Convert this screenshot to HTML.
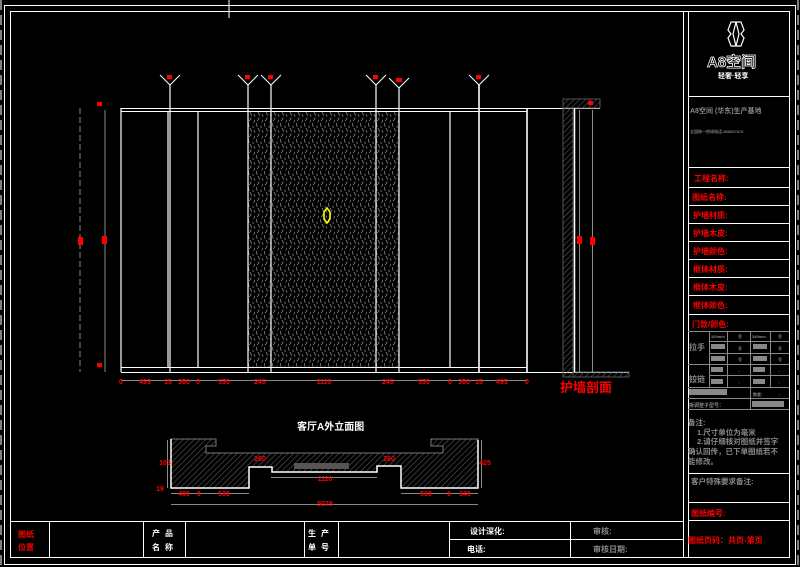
<!DOCTYPE html>
<html><head><meta charset="utf-8"><style>
html,body{margin:0;padding:0;background:#000;}
svg{display:block}
text{font-family:"Liberation Sans","Noto Sans CJK SC",sans-serif;font-weight:bold}
</style></head><body>
<svg width="800" height="567" viewBox="0 0 800 567" xmlns="http://www.w3.org/2000/svg">
<defs>
<pattern id="hatch" width="4" height="4" patternUnits="userSpaceOnUse" patternTransform="rotate(45)">
<line x1="0" y1="0" x2="0" y2="4" stroke="#666" stroke-width="1"/>
</pattern>
<pattern id="wave" width="8" height="16" patternUnits="userSpaceOnUse">
<path d="M2 0 Q5 4 2 8 Q-1 12 2 16" stroke="#999" stroke-width="0.7" fill="none" stroke-dasharray="4 2"/>
<path d="M6 2 Q8 6 6 10 Q4 14 6 18" stroke="#888" stroke-width="0.7" fill="none" stroke-dasharray="3 3"/>
</pattern>
</defs>
<rect width="800" height="567" fill="#000"/>
<line x1="1" y1="0" x2="1" y2="567" stroke="#fff" stroke-dasharray="10 5"/>
<line x1="798" y1="0" x2="798" y2="567" stroke="#fff" stroke-dasharray="10 5"/>
<rect x="4.5" y="5.5" width="791" height="559" fill="none" stroke="#fff"/>
<rect x="10.5" y="11.5" width="779" height="546" fill="none" stroke="#fff"/>
<line x1="229" y1="0" x2="229" y2="18" stroke="#fff"/>
<line x1="683.5" y1="11" x2="683.5" y2="558" stroke="#fff"/>
<line x1="688.5" y1="11" x2="688.5" y2="558" stroke="#fff"/>
<g stroke="#fff">
<line x1="688" y1="96.5" x2="789" y2="96.5"/>
<line x1="688" y1="167.5" x2="789" y2="167.5"/>
<line x1="688" y1="187.5" x2="789" y2="187.5"/>
<line x1="688" y1="205.5" x2="789" y2="205.5"/>
<line x1="688" y1="223.5" x2="789" y2="223.5"/>
<line x1="688" y1="241.5" x2="789" y2="241.5"/>
<line x1="688" y1="259.5" x2="789" y2="259.5"/>
<line x1="688" y1="277.5" x2="789" y2="277.5"/>
<line x1="688" y1="295.5" x2="789" y2="295.5"/>
<line x1="688" y1="314.5" x2="789" y2="314.5"/>
<line x1="688" y1="473.5" x2="789" y2="473.5"/>
<line x1="688" y1="502.5" x2="789" y2="502.5"/>
<line x1="688" y1="520.5" x2="789" y2="520.5"/>
</g>
<g stroke="#888">
<line x1="688" y1="331.5" x2="789" y2="331.5"/>
<line x1="709" y1="341.5" x2="789" y2="341.5"/>
<line x1="709" y1="353.5" x2="789" y2="353.5"/>
<line x1="688" y1="364.5" x2="789" y2="364.5"/>
<line x1="709" y1="375.5" x2="789" y2="375.5"/>
<line x1="688" y1="387.5" x2="789" y2="387.5"/>
<line x1="688" y1="398.5" x2="789" y2="398.5"/>
<line x1="688" y1="409.5" x2="789" y2="409.5"/>
<line x1="709.5" y1="331" x2="709.5" y2="387"/>
<line x1="727.5" y1="331" x2="727.5" y2="387"/>
<line x1="750.5" y1="331" x2="750.5" y2="409"/>
<line x1="770.5" y1="331" x2="770.5" y2="387"/>
</g>
<g fill="#888">
<rect x="711" y="344" width="14" height="5"/><rect x="711" y="356" width="14" height="5"/>
<rect x="753" y="344" width="14" height="5"/><rect x="753" y="356" width="14" height="5"/>
<rect x="711" y="367" width="12" height="5"/><rect x="711" y="379" width="12" height="5"/>
<rect x="753" y="367" width="12" height="5"/><rect x="753" y="379" width="12" height="5"/>
<rect x="689" y="389" width="38" height="6"/><rect x="752" y="401" width="32" height="6"/>
</g>
<g fill="#888" font-size="4"><text x="711" y="338">320mm</text><text x="752" y="338">340mm</text>
<text x="738" y="338">号</text><text x="778" y="338">号</text><text x="738" y="350">号</text><text x="778" y="350">号</text><text x="738" y="361">号</text><text x="778" y="361">号</text>
<text x="738" y="373">↑</text><text x="778" y="373">↑</text><text x="738" y="384">↑</text><text x="778" y="384">↑</text><text x="753" y="396">数量：</text><text x="778" y="396">↑</text></g>
<text x="689" y="350" font-size="8" fill="#888">拉手</text>
<text x="689" y="382" font-size="8" fill="#888">铰链</text>
<text x="689" y="407" font-size="5" fill="#888">拆调整子型号：</text>
<g stroke="#fff" stroke-width="1.2" fill="none">
<path d="M731 22 L741 22 L744 30 L741 34 L744 38 L741 46 L731 46 L728 38 L731 34 L728 30 Z"/>
<path d="M736 22 L733 34 L736 46 M736 22 L739 34 L736 46"/>
</g>
<text x="707" y="67" font-size="15" fill="none" stroke="#fff" stroke-width="0.8" font-weight="normal">A8空间</text>
<text x="718" y="78" font-size="7" fill="#fff">轻奢·轻享</text>
<text x="690" y="113" font-size="7" fill="#888">A8空间 (华东)生产基地</text>
<text x="690" y="133" font-size="4" fill="#777">全国统一热线电话:888887878</text>
<g font-size="8" fill="#f00">
<text x="694" y="181">工程名称:</text>
<text x="692" y="200">图纸名称:</text>
<text x="693" y="218">护墙材质:</text>
<text x="693" y="236">护墙木皮:</text>
<text x="693" y="254">护墙颜色:</text>
<text x="693" y="272">框体材质:</text>
<text x="693" y="290">框体木皮:</text>
<text x="693" y="308">框体颜色:</text>
<text x="692" y="327">门款/颜色:</text>
<text x="691" y="516">图纸编号:</text>
<text x="688" y="543">图纸页码：共页-第页</text>
</g>
<g font-size="7.5" fill="#888">
<text x="688" y="425">备注:</text>
<text x="697" y="435">1.尺寸单位为毫米</text>
<text x="697" y="444">2.请仔细核对图纸并签字</text>
<text x="688" y="454">确认回传，已下单图纸若不</text>
<text x="688" y="464">能修改。</text>
<text x="691" y="484">客户特殊要求备注:</text>
</g>
<g stroke="#fff">
<line x1="11" y1="521.5" x2="683" y2="521.5"/>
<line x1="449" y1="539.5" x2="683" y2="539.5"/>
<line x1="49.5" y1="521" x2="49.5" y2="558"/>
<line x1="143.5" y1="521" x2="143.5" y2="558"/>
<line x1="185.5" y1="521" x2="185.5" y2="558"/>
<line x1="304.5" y1="521" x2="304.5" y2="558"/>
<line x1="338.5" y1="521" x2="338.5" y2="558"/>
<line x1="449.5" y1="521" x2="449.5" y2="558"/>
<line x1="570.5" y1="521" x2="570.5" y2="558"/>
</g>
<text x="18" y="537" font-size="8" fill="#f00">图纸</text>
<text x="18" y="550" font-size="8" fill="#f00">位置</text>
<g font-size="8" fill="#fff">
<text x="152" y="536" letter-spacing="5">产品</text>
<text x="152" y="550" letter-spacing="5">名称</text>
<text x="308" y="536" letter-spacing="5">生产</text>
<text x="308" y="550" letter-spacing="5">单号</text>
<text x="470" y="534">设计深化:</text>
<text x="467" y="552">电话:</text>
</g>
<text x="593" y="534" font-size="8" fill="#888">审核:</text>
<text x="593" y="552" font-size="8" fill="#888">审核日期:</text>
<rect x="248" y="111" width="151" height="256" fill="url(#wave)"/>
<line x1="121" y1="108.5" x2="600" y2="108.5" stroke="#fff"/>
<line x1="121" y1="111.5" x2="527" y2="111.5" stroke="#fff"/>
<line x1="121" y1="367.5" x2="527" y2="367.5" stroke="#fff"/>
<line x1="121" y1="372.5" x2="629" y2="372.5" stroke="#fff"/>
<g stroke="#fff" stroke-width="1.2">
<line x1="121" y1="108" x2="121" y2="372"/>
<line x1="168" y1="111" x2="168" y2="367"/>
<line x1="170" y1="85" x2="170" y2="372"/>
<line x1="198" y1="111" x2="198" y2="367"/>
<line x1="248" y1="85" x2="248" y2="372"/>
<line x1="271" y1="85" x2="271" y2="372"/>
<line x1="376" y1="85" x2="376" y2="372"/>
<line x1="399" y1="88" x2="399" y2="372"/>
<line x1="450" y1="111" x2="450" y2="367"/>
<line x1="479" y1="85" x2="479" y2="372" stroke-width="1.6"/>
<line x1="527" y1="108" x2="527" y2="372" stroke-width="1.6"/>
</g>
<g stroke="#fff" fill="none">
<path d="M160 75 L170 85 L180 75"/><path d="M238 75 L248 85 L258 75"/><path d="M261 75 L271 85 L281 75"/>
<path d="M366 75 L376 85 L386 75"/><path d="M389 78 L399 88 L409 78"/><path d="M469 75 L479 85 L489 75"/>
</g>
<g fill="#f00">
<rect x="167" y="75" width="5" height="4"/><rect x="245" y="75" width="5" height="4"/><rect x="268" y="75" width="5" height="4"/>
<rect x="373" y="75" width="5" height="4"/><rect x="396" y="78" width="6" height="4"/><rect x="476" y="75" width="5" height="4"/>
</g>
<path d="M327 208 L330 212 L330 219 L327 223 L324 219 L324 212 Z" stroke="#ff0" stroke-width="1.6" fill="none"/>
<line x1="80" y1="108" x2="80" y2="372" stroke="#888" stroke-dasharray="6 3"/>
<line x1="105" y1="110" x2="105" y2="372" stroke="#888"/>
<rect x="78" y="237" width="5" height="8" fill="#f00"/><rect x="102" y="236" width="5" height="8" fill="#f00"/>
<rect x="97" y="102" width="5" height="4" fill="#f00"/><rect x="97" y="363" width="5" height="4" fill="#f00"/>
<rect x="563" y="99" width="37" height="9" fill="url(#hatch)" stroke="#555"/>
<rect x="563" y="108" width="10" height="269" fill="url(#hatch)" stroke="#555"/>
<rect x="573" y="372" width="56" height="5" fill="url(#hatch)" stroke="#555"/>
<line x1="574.5" y1="108" x2="574.5" y2="372" stroke="#fff" stroke-width="1.5"/>
<line x1="579.5" y1="110" x2="579.5" y2="372" stroke="#888"/>
<line x1="592.5" y1="110" x2="592.5" y2="372" stroke="#888"/>
<rect x="588" y="101" width="5" height="4" fill="#f00"/>
<rect x="577" y="236" width="5" height="8" fill="#f00"/><rect x="590" y="237" width="5" height="8" fill="#f00"/>
<text x="560" y="392" font-size="13" fill="#f00">护墙剖面</text>
<line x1="121" y1="380.5" x2="527" y2="380.5" stroke="#888"/>
<g font-size="7" fill="#f00" text-anchor="middle">
<text x="121" y="384">0</text><text x="145" y="384">493</text><text x="168" y="384">15</text><text x="184" y="384">300</text><text x="198" y="384">0</text>
<text x="224" y="384">530</text><text x="260" y="384">245</text><text x="324" y="384">1110</text><text x="388" y="384">245</text><text x="424" y="384">530</text>
<text x="450" y="384">0</text><text x="464" y="384">300</text><text x="479" y="384">15</text><text x="502" y="384">493</text><text x="527" y="384">0</text>
</g>
<text x="297" y="430" font-size="10" fill="#fff">客厅A外立面图</text>
<path d="M171 439 L216 439 L216 446 L206 446 L206 453 L443 453 L443 446 L431 446 L431 439 L478 439 L478 488 L401 488 L401 466 L377 466 L377 472 L272 472 L272 467 L249 467 L249 488 L171 488 Z" fill="url(#hatch)" stroke="#777"/>
<rect x="294" y="463" width="55" height="6" fill="#555"/>
<path d="M171 439 L171 488 L249 488 L249 467 L272 467 L272 472 L377 472 L377 466 L401 466 L401 488 L478 488 L478 440" fill="none" stroke="#fff" stroke-width="1.5"/>
<line x1="171" y1="493.5" x2="249" y2="493.5" stroke="#888"/>
<line x1="401" y1="493.5" x2="478" y2="493.5" stroke="#888"/>
<line x1="271" y1="477.5" x2="377" y2="477.5" stroke="#888"/>
<line x1="171" y1="504.5" x2="478" y2="504.5" stroke="#888"/>
<line x1="167.5" y1="440" x2="167.5" y2="488" stroke="#888"/>
<line x1="481.5" y1="440" x2="481.5" y2="488" stroke="#888"/>
<g font-size="7" fill="#f00" text-anchor="middle">
<text x="184" y="496">400</text><text x="199" y="496">0</text><text x="224" y="496">530</text>
<text x="426" y="496">530</text><text x="449" y="496">0</text><text x="465" y="496">340</text>
<text x="325" y="481">1110</text><text x="325" y="506">5079</text>
<text x="260" y="461">260</text><text x="389" y="461">260</text>
<text x="165" y="465">103</text><text x="485" y="465">425</text><text x="160" y="491">19</text>
</g>
</svg>
</body></html>
